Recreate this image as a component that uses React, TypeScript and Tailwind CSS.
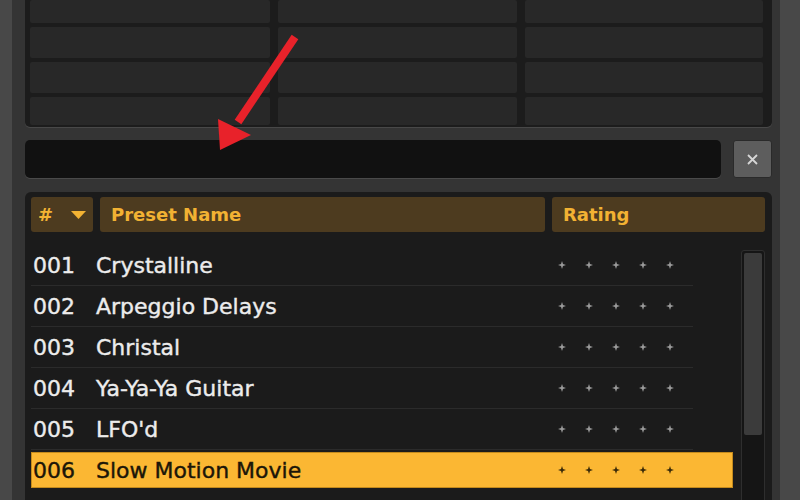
import React from "react";

type Preset = { id: string; name: string; selected?: boolean };

const PRESETS: Preset[] = [
  { id: "001", name: "Crystalline" },
  { id: "002", name: "Arpeggio Delays" },
  { id: "003", name: "Christal" },
  { id: "004", name: "Ya-Ya-Ya Guitar" },
  { id: "005", name: "LFO'd" },
  { id: "006", name: "Slow Motion Movie", selected: true },
];

const FONT = { fontFamily: '"DejaVu Sans", Verdana, sans-serif' };

function Spark({ dark }: { dark?: boolean }) {
  return (
    <svg width="8" height="8" viewBox="0 0 8 8">
      <path
        d="M4 0 L5 3 L8 4 L5 5 L4 8 L3 5 L0 4 L3 3 Z"
        fill={dark ? "#3a2a08" : "#9a9a9a"}
      />
    </svg>
  );
}

function Stars({ dark }: { dark?: boolean }) {
  return (
    <div className="flex">
      {[0, 1, 2, 3, 4].map((i) => (
        <span key={i} className="flex w-[27px] justify-center">
          <Spark dark={dark} />
        </span>
      ))}
    </div>
  );
}

function PresetRow({ preset }: { preset: Preset }) {
  if (preset.selected) {
    return (
      <div className="h-[40px] py-[2px]">
        <div className="flex h-[36px] items-center border border-[#c48a1c] bg-[#fbb733] pl-[1px] text-[22px] text-[#1c1608] [-webkit-text-stroke:0.4px_currentColor]">
          <span className="w-[63px]">{preset.id}</span>
          <span className="w-[452px]">{preset.name}</span>
          <Stars dark />
        </div>
      </div>
    );
  }
  return (
    <div>
      <div className="flex h-[40px] items-center pl-[2px] text-[22px] text-[#ececec] [-webkit-text-stroke:0.4px_currentColor]">
        <span className="w-[63px]">{preset.id}</span>
        <span className="w-[452px]">{preset.name}</span>
        <Stars />
      </div>
      <div className="h-px w-[662px] bg-[#2b2b2b]" />
    </div>
  );
}

export default function App() {
  return (
    <div
      className="relative flex h-[500px] w-[800px] overflow-hidden bg-[#484848]"
      style={FONT}
    >
      <div className="ml-[12px] flex w-[768px] flex-col bg-[#343434] pl-[13px] pr-[8px]">
        {/* slot grid */}
        <div className="grid h-[127px] shrink-0 grid-cols-[240px_239px_238px] grid-rows-[23px_31px_31px_28px] gap-x-[8px] gap-y-[4px] rounded-b-[5px] bg-[#1c1c1c] pl-[5px] pr-[9px] shadow-[0_1px_0_#484848]">
          {Array.from({ length: 12 }).map((_, i) => (
            <div key={i} className="rounded-[2px] bg-[#282828]" />
          ))}
        </div>

        {/* search */}
        <div className="mt-[13px] flex h-[38px] shrink-0 gap-[12px]">
          <div className="flex-1 rounded-[5px] bg-[#111111] shadow-[0_1px_0_#4a4a4a]" />
          <button
            type="button"
            className="flex w-[39px] items-center justify-center rounded-[3px] border border-[#2a2a2a] bg-[#5d5d5d]"
          >
            <svg width="11" height="11" viewBox="0 0 11 11">
              <path d="M1 1 L10 10 M10 1 L1 10" stroke="#d6d6d6" strokeWidth="1.8" />
            </svg>
          </button>
        </div>

        {/* preset list */}
        <div className="mt-[14px] min-h-0 flex-1 rounded-t-[6px] bg-[#1b1b1b] pl-[6px] pr-[7px] pt-[5px]">
          <div className="flex h-[35px] gap-[7px] text-[18px] font-bold text-[#f2b233]">
            <div className="flex w-[62px] items-center rounded-[3px] bg-[#4d3b1f] pl-[7px]">
              <span>#</span>
              <svg className="ml-[18px]" width="15" height="8" viewBox="0 0 15 8">
                <path d="M0 0 H15 L7.5 8 Z" fill="#f2b233" />
              </svg>
            </div>
            <div className="flex w-[445px] items-center rounded-[3px] bg-[#4d3b1f] pl-[11px]">
              Preset Name
            </div>
            <div className="flex w-[213px] items-center rounded-[3px] bg-[#4d3b1f] pl-[11px]">
              Rating
            </div>
          </div>

          <div className="mt-[13px] flex gap-[8px]">
            <div className="w-[702px]">
              {PRESETS.map((p) => (
                <PresetRow key={p.id} preset={p} />
              ))}
            </div>
            <div className="mt-[5px] h-[260px] w-[24px] rounded-[3px] border border-[#2e2e2e] bg-[#151515] p-[2px]">
              <div className="h-[182px] rounded-[2px] bg-[#3b3b3b]" />
            </div>
          </div>
        </div>
      </div>

      {/* annotation arrow */}
      <svg
        className="pointer-events-none absolute left-0 top-0"
        width="800"
        height="500"
        viewBox="0 0 800 500"
      >
        <line x1="295" y1="37" x2="238" y2="122" stroke="#e8222a" strokeWidth="8" />
        <path d="M220 150 L218 119 L251 135 Z" fill="#e8222a" />
      </svg>
    </div>
  );
}
